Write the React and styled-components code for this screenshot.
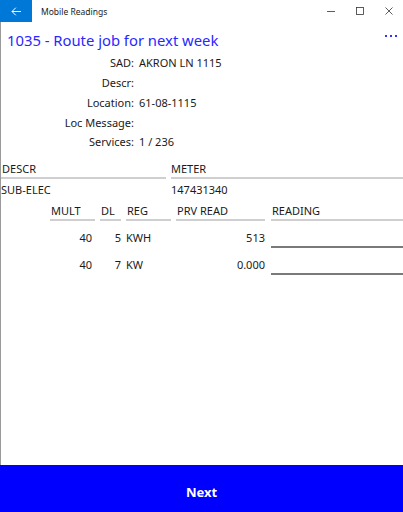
import React from "react";
import styled, { createGlobalStyle } from "styled-components";

const GlobalStyle = createGlobalStyle`
  html, body {
    margin: 0;
    padding: 0;
    height: 100%;
    background: #ffffff;
  }
  #root {
    height: 100%;
  }
  * {
    box-sizing: border-box;
  }
`;

const Window = styled.div`
  height: 100vh;
  display: flex;
  flex-direction: column;
  font-family: "Noto Sans", "Open Sans", sans-serif;
  color: #1a1a1a;
  background: #fff;
`;

const TitleBar = styled.div`
  height: 22px;
  flex: none;
  display: flex;
  align-items: center;
`;

const BackButton = styled.button`
  width: 32px;
  height: 22px;
  border: none;
  padding: 0;
  background: #0078d7;
  color: white;
  display: flex;
  align-items: center;
  justify-content: center;
`;

const AppName = styled.div`
  margin-left: 9px;
  font-size: 8.5px;
  color: #222;
  flex: 1;
`;

const Controls = styled.div`
  display: flex;
  height: 22px;
`;

const ControlButton = styled.div`
  width: 29px;
  height: 22px;
  display: flex;
  align-items: center;
  justify-content: center;
`;

const Content = styled.div`
  flex: 1;
  border-left: 1px solid #9a9a9a;
  display: flex;
  flex-direction: column;
`;

const Header = styled.div`
  display: flex;
  align-items: center;
  justify-content: space-between;
  padding: 4px 6px 0 6px;
  height: 31px;
`;

const HeaderTitle = styled.div`
  font-size: 14.8px;
  line-height: 24px;
  color: #2828ff;
`;

const More = styled.div`
  display: flex;
  gap: 3px;
  align-self: flex-start;
  margin-top: 9px;
`;

const Dot = styled.span`
  width: 2px;
  height: 2px;
  background: #3030ff;
`;

const InfoGrid = styled.div`
  display: grid;
  grid-template-columns: 133px 1fr;
  column-gap: 5px;
  grid-auto-rows: 19.75px;
  align-items: center;
  font-size: 11px;
`;

const Label = styled.div`
  text-align: right;
`;

const Value = styled.div``;

const MeterTable = styled.div`
  display: grid;
  grid-template-columns: 165px 1fr;
  column-gap: 5px;
  margin-top: 9px;
  font-size: 11px;
`;

const HeadCell = styled.div`
  line-height: 16px;
  padding-left: ${(p) => p.$indent || 0}px;
  border-bottom: 2px solid #cfcfcf;
`;

const BodyCell = styled.div`
  line-height: 16px;
  padding-top: 3px;
`;

const RegTable = styled.div`
  display: grid;
  grid-template-columns: 45px 21px 45px 89px 1fr;
  column-gap: 5px;
  padding-left: 49px;
  margin-top: 5px;
  font-size: 11px;
`;

const RegHead = styled.div`
  line-height: 16px;
  padding-left: 1px;
  border-bottom: 2px solid #cfcfcf;
  ${(p) => p.$last && "margin-left: 1px;"}
`;

const RegCell = styled.div`
  height: 27px;
  display: flex;
  align-items: flex-end;
  justify-content: ${(p) => (p.$right ? "flex-end" : "flex-start")};
  padding-right: ${(p) => p.$pr || 0}px;
  padding-bottom: 2px;
  line-height: 16px;
`;

const ReadingInput = styled.input`
  height: 27px;
  width: 100%;
  margin-left: 1px;
  border: none;
  border-bottom: 2px solid #7a7a7a;
  background: transparent;
  outline: none;
  font: inherit;
  padding: 0;
`;

const Spacer = styled.div`
  flex: 1;
`;

const NextButton = styled.button`
  height: 47px;
  flex: none;
  width: 100%;
  border: none;
  padding: 6px 0 0 0;
  background: #0000ff;
  color: #fff;
  font-family: "Noto Sans", "Open Sans", sans-serif;
  font-weight: 700;
  font-size: 13px;
`;

const info = [
  ["SAD:", "AKRON LN 1115"],
  ["Descr:", ""],
  ["Location:", "61-08-1115"],
  ["Loc Message:", ""],
  ["Services:", "1 / 236"],
];

const registers = [
  { mult: "40", dl: "5", reg: "KWH", prv: "513" },
  { mult: "40", dl: "7", reg: "KW", prv: "0.000" },
];

export default function App() {
  return (
    <>
      <GlobalStyle />
      <Window>
        <TitleBar>
          <BackButton>
            <svg width="10" height="9" viewBox="0 0 10 9" fill="none" stroke="white" strokeWidth="1">
              <path d="M10 4.5H1M4.8 0.7L1 4.5l3.8 3.8" />
            </svg>
          </BackButton>
          <AppName>Mobile Readings</AppName>
          <Controls>
            <ControlButton>
              <svg width="8" height="8" viewBox="0 0 8 8" stroke="#333" strokeWidth="0.8">
                <path d="M0 4.5h8" />
              </svg>
            </ControlButton>
            <ControlButton>
              <svg width="8" height="8" viewBox="0 0 8 8" fill="none" stroke="#333" strokeWidth="0.8">
                <rect x="0.5" y="0.5" width="7" height="7" />
              </svg>
            </ControlButton>
            <ControlButton>
              <svg width="8" height="8" viewBox="0 0 8 8" stroke="#333" strokeWidth="0.8">
                <path d="M0.5 0.5l7 7M7.5 0.5l-7 7" />
              </svg>
            </ControlButton>
          </Controls>
        </TitleBar>
        <Content>
          <Header>
            <HeaderTitle>1035 - Route job for next week</HeaderTitle>
            <More>
              <Dot />
              <Dot />
              <Dot />
            </More>
          </Header>
          <InfoGrid>
            {info.map(([label, value]) => (
              <React.Fragment key={label}>
                <Label>{label}</Label>
                <Value>{value}</Value>
              </React.Fragment>
            ))}
          </InfoGrid>
          <MeterTable>
            <HeadCell $indent={1}>DESCR</HeadCell>
            <HeadCell>METER</HeadCell>
            <BodyCell>SUB-ELEC</BodyCell>
            <BodyCell>147431340</BodyCell>
          </MeterTable>
          <RegTable>
            <RegHead>MULT</RegHead>
            <RegHead>DL</RegHead>
            <RegHead>REG</RegHead>
            <RegHead>PRV READ</RegHead>
            <RegHead $last>READING</RegHead>
            {registers.map((r, i) => (
              <React.Fragment key={i}>
                <RegCell $right $pr={3}>{r.mult}</RegCell>
                <RegCell $right>{r.dl}</RegCell>
                <RegCell>{r.reg}</RegCell>
                <RegCell $right>{r.prv}</RegCell>
                <ReadingInput />
              </React.Fragment>
            ))}
          </RegTable>
          <Spacer />
        </Content>
        <NextButton>Next</NextButton>
      </Window>
    </>
  );
}
